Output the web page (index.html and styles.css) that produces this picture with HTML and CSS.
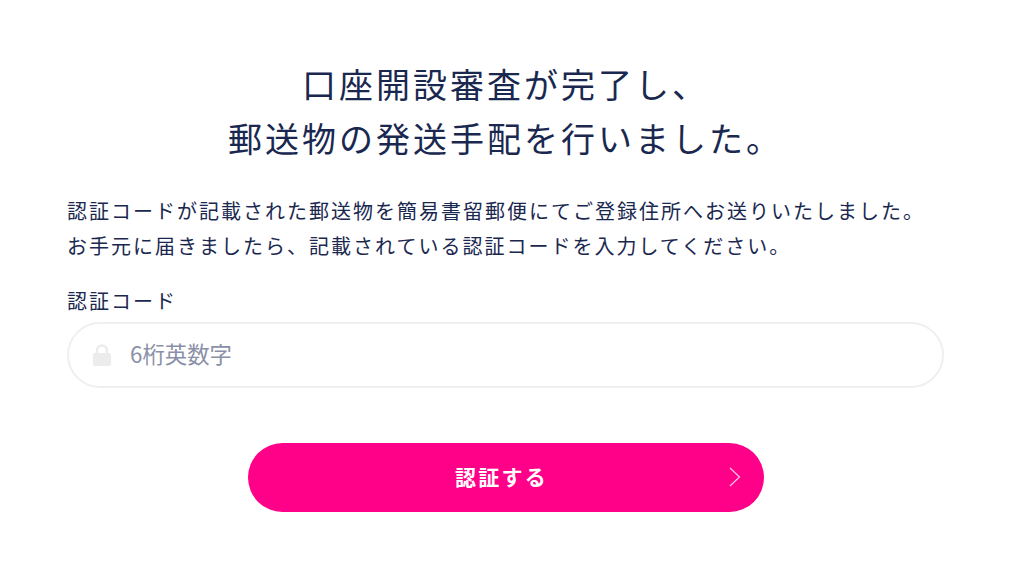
FILE: index.html
```html
<!DOCTYPE html>
<html lang="ja">

<head>
  <meta charset="UTF-8">
  <meta name="viewport" content="width=device-width, initial-scale=1">
  <title>認証コード入力</title>
  <link rel="stylesheet" href="styles.css">
</head>

<body>
  <main class="page">
    <h1 class="title">口座開設審査が完了し、<br>郵送物の発送手配を行いました。</h1>
    <p class="lead">認証コードが記載された郵送物を簡易書留郵便にてご登録住所へお送りいたしました。<br>お手元に届きましたら、記載されている認証コードを入力してください。</p>

    <form class="form" onsubmit="event.preventDefault();">
      <label class="label" for="code">認証コード</label>
      <div class="field">
        <svg class="lock" width="20" height="22" viewBox="0 0 20 22" aria-hidden="true">
          <path d="M5 10V6.5a5 5 0 0 1 10 0V10" fill="none" stroke="#ececec" stroke-width="2.4"/>
          <rect x="1" y="9" width="18" height="13" rx="2" fill="#ececec"/>
        </svg>
        <input class="input" id="code" type="text" placeholder="6桁英数字">
      </div>
      <button class="submit" type="submit">
        認証する
        <svg class="arrow" width="12" height="20" viewBox="0 0 12 20" aria-hidden="true">
          <path d="M1 1l9.5 9L1 19" fill="none" stroke="#ffc4e2" stroke-width="1.2"/>
        </svg>
      </button>
    </form>
  </main>
</body>
</html>
```

FILE: styles.css
```css
* {
  box-sizing: border-box;
}

body {
  margin: 0;
  background-color: #fff;
  color: #1a2850;
  font-family: "Noto Sans CJK JP", "Noto Sans", sans-serif;
}

.page {
  padding: 57px 80px 0 67px;
}

.title {
  margin: 0 0 28px;
  font-size: 34px;
  font-weight: 400;
  line-height: 54px;
  letter-spacing: 3px;
  text-align: center;
}

.lead {
  margin: 0 0 23px;
  font-size: 20px;
  line-height: 35px;
  letter-spacing: 2px;
}

.form {
  display: flex;
  flex-direction: column;
}

.label {
  margin-bottom: 6px;
  font-size: 20px;
  line-height: 30px;
  letter-spacing: 2px;
}

.field {
  display: flex;
  align-items: center;
  gap: 18px;
  height: 66px;
  padding: 0 30px 0 23px;
  border: 2px solid #efefef;
  border-radius: 33px;
}

.lock {
  flex: none;
}

.input {
  flex: 1;
  min-width: 0;
  margin-bottom: 4px;
  border: none;
  outline: none;
  padding: 0;
  font-family: inherit;
  font-size: 22.4px;
  color: #1a2850;
}

.input::placeholder {
  color: #8a90a8;
  opacity: 1;
}

.submit {
  position: relative;
  align-self: center;
  width: 516px;
  height: 69px;
  margin-top: 55px;
  padding: 0 8px 4px 0;
  border: none;
  border-radius: 35px;
  background-color: #ff0088;
  color: #fff;
  font-family: inherit;
  font-size: 21px;
  font-weight: 700;
  letter-spacing: 2.2px;
  cursor: pointer;
}

.arrow {
  position: absolute;
  top: 24px;
  right: 23px;
}
```
